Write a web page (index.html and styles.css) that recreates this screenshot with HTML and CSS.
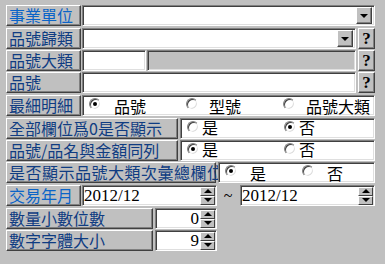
FILE: index.html
```html
<!DOCTYPE html>
<html lang="zh-Hant">
<head>
    <meta charset="UTF-8">
    <title>查詢條件</title>
<link rel="stylesheet" href="styles.css">
</head>
<body>
    <div class="form">
        <div class="row">
            <div class="lbl hi">事業單位</div>
            <div class="field combo full"><span class="drop"><i class="tri"></i></span></div>
        </div>
        <div class="row gap">
            <div class="lbl">品號歸類</div>
            <div class="field combo mid"><span class="drop"><i class="tri"></i></span></div>
            <span class="help">?</span>
        </div>
        <div class="row">
            <div class="lbl">品號大類</div>
            <div class="field short"></div>
            <div class="field grey"></div>
            <span class="help">?</span>
        </div>
        <div class="row">
            <div class="lbl">品號</div>
            <div class="field mid"></div>
            <span class="help">?</span>
        </div>
        <div class="row gap">
            <div class="lbl">最細明細</div>
            <div class="field group full">
                <label class="opt w97"><i class="radio on"></i><span class="txt t13">品號</span></label>
                <label class="opt w97"><i class="radio"></i><span class="txt t11">型號</span></label>
                <label class="opt"><i class="radio"></i><span class="txt t11">品號大類</span></label>
            </div>
        </div>
        <div class="row gap">
            <div class="lbl long">全部欄位爲0是否顯示</div>
            <div class="field group two">
                <label class="opt w97"><i class="radio"></i><span class="txt">是</span></label>
                <label class="opt"><i class="radio on"></i><span class="txt">否</span></label>
            </div>
        </div>
        <div class="row">
            <div class="lbl long">品號/品名與金額同列</div>
            <div class="field group two">
                <label class="opt w97"><i class="radio on"></i><span class="txt">是</span></label>
                <label class="opt"><i class="radio"></i><span class="txt">否</span></label>
            </div>
        </div>
        <div class="row">
            <div class="lbl longer">是否顯示品號大類次彙總欄位</div>
            <div class="field group rest">
                <label class="opt w77"><i class="radio on"></i><span class="txt t13">是</span></label>
                <label class="opt"><i class="radio"></i><span class="txt t13">否</span></label>
            </div>
        </div>
        <div class="row gap">
            <div class="lbl hi">交易年月</div>
            <div class="field spin date"><span class="val left">2012/12</span><span class="arrows"><i class="up"></i><i class="down"></i></span></div>
            <span class="tilde">~</span>
            <div class="field spin date"><span class="val left">2012/12</span><span class="arrows"><i class="up"></i><i class="down"></i></span></div>
        </div>
        <div class="row gap">
            <div class="lbl num">數量小數位數</div>
            <div class="field spin small"><span class="val">0</span><span class="arrows"><i class="up"></i><i class="down"></i></span></div>
        </div>
        <div class="row">
            <div class="lbl num">數字字體大小</div>
            <div class="field spin small"><span class="val">9</span><span class="arrows"><i class="up"></i><i class="down"></i></span></div>
        </div>
    </div>
</body>
</html>
```
FILE: styles.css
```css
body {
    margin: 0;
    background-color: #c0c0c0;
    font-family: "Noto Sans CJK TC", sans-serif;
    font-size: 16px;
    width: 385px;
    height: 264px;
    overflow: hidden;
}

.form {
    display: flex;
    flex-direction: column;
    gap: 1px;
    padding: 5px 0 0 6px;
    width: 369px;
}

.row {
    display: flex;
    align-items: stretch;
    height: 21px;
}

.row.gap {
    margin-top: 1px;
}

/* raised label panels */
.lbl {
    box-sizing: border-box;
    width: 75px;
    border-top: 1px solid #fff;
    border-left: 1px solid #fff;
    border-right: 1px solid #404040;
    border-bottom: 1px solid #404040;
    box-shadow: inset -1px -1px #808080;
    color: #0f3c82;
    padding-left: 2px;
    line-height: 19px;
    white-space: nowrap;
}

.lbl.hi {
    color: #0a64c8;
}

.lbl.long {
    width: 172px;
}

.lbl.longer {
    width: 210px;
    letter-spacing: 0.5px;
}

.lbl.num {
    width: 147px;
}

/* sunken edit fields */
.field {
    box-sizing: border-box;
    position: relative;
    margin-left: 1px;
    background: #fff;
    border-top: 1px solid #808080;
    border-left: 1px solid #808080;
    border-right: 1px solid #fff;
    border-bottom: 1px solid #fff;
    box-shadow: inset 1px 1px #404040, inset -1px -1px #dfdfdf;
    display: flex;
    align-items: center;
}

.field.full {
    width: 293px;
}

.field.mid {
    width: 274px;
}

.field.short {
    width: 64px;
}

.field.grey {
    width: 209px;
    margin-left: 1px;
    background: #c0c0c0;
}

.field.two {
    margin-left: 2px;
    width: 195px;
}

.field.rest {
    margin-left: 2px;
    width: 157px;
}

.field.date {
    width: 135px;
}

.field.small {
    margin-left: 2px;
    width: 62px;
}

.combo {
    justify-content: flex-end;
}

.drop {
    box-sizing: border-box;
    width: 16px;
    height: 17px;
    margin-right: 2px;
    background: #c0c0c0;
    border-top: 1px solid #fff;
    border-left: 1px solid #fff;
    border-right: 1px solid #404040;
    border-bottom: 1px solid #404040;
    box-shadow: inset -1px -1px #808080;
    display: flex;
    align-items: center;
    justify-content: center;
}

.tri {
    width: 0;
    height: 0;
    border-left: 4px solid transparent;
    border-right: 4px solid transparent;
    border-top: 4px solid #000;
    margin-top: 1px;
}

.help {
    box-sizing: border-box;
    width: 17px;
    margin-left: 2px;
    background: #c0c0c0;
    border-top: 1px solid #fff;
    border-left: 1px solid #fff;
    border-right: 1px solid #404040;
    border-bottom: 1px solid #404040;
    box-shadow: inset -1px -1px #808080;
    font-family: "Liberation Serif", serif;
    font-weight: bold;
    font-size: 17px;
    line-height: 19px;
    text-align: center;
}

/* radio groups */
.group {
    align-items: flex-start;
}

.opt {
    display: flex;
    align-items: flex-start;
    padding-left: 6px;
    color: #000;
    line-height: 17px;
    white-space: nowrap;
}

.w97 {
    width: 91px;
}

.w77 {
    width: 71px;
}

.radio {
    box-sizing: border-box;
    position: relative;
    width: 12px;
    height: 12px;
    margin-top: 2px;
    border-radius: 50%;
    background: #fff;
    border: 1px solid;
    border-color: #808080 #fff #fff #808080;
    box-shadow: inset 1px 1px #404040, inset -1px -1px #dfdfdf;
}

.radio.on::after {
    content: "";
    position: absolute;
    left: 3px;
    top: 3px;
    width: 4px;
    height: 4px;
    border-radius: 50%;
    background: #000;
}

.txt {
    margin-left: 3px;
}

.txt.t13 {
    margin-left: 13px;
    margin-top: 2px;
}

.txt.t11 {
    margin-left: 11px;
    margin-top: 2px;
}

/* spin edits */
.spin {
    justify-content: space-between;
}

.val {
    flex: 1;
    font-family: "Liberation Serif", serif;
    font-size: 17px;
    line-height: 18px;
    text-align: right;
    padding-right: 1px;
}

.val.left {
    text-align: left;
    padding-left: 1px;
}

.arrows {
    display: flex;
    flex-direction: column;
    margin-right: 1px;
}

.arrows i {
    box-sizing: border-box;
    position: relative;
    width: 15px;
    height: 9px;
    background: #c0c0c0;
    border-top: 1px solid #fff;
    border-left: 1px solid #fff;
    border-right: 1px solid #404040;
    border-bottom: 1px solid #404040;
}

.arrows i::after {
    content: "";
    position: absolute;
    left: 3px;
    width: 0;
    height: 0;
    border-left: 4px solid transparent;
    border-right: 4px solid transparent;
}

.arrows .up::after {
    top: 1px;
    border-bottom: 4px solid #000;
}

.arrows .down::after {
    top: 1px;
    border-top: 4px solid #000;
}

.tilde {
    width: 22px;
    text-align: center;
    line-height: 22px;
    font-family: "Liberation Serif", serif;
}
```
